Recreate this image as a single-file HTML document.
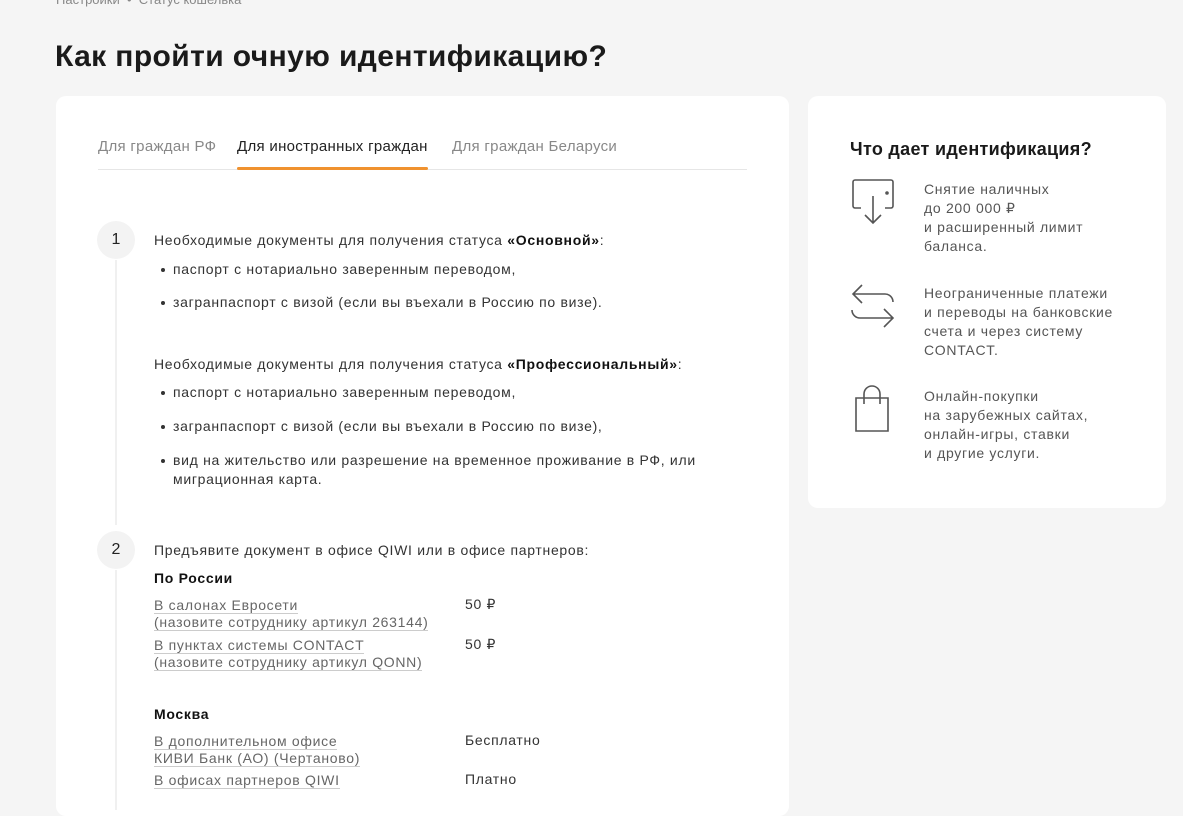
<!DOCTYPE html>
<html><head><meta charset="utf-8"><style>
*{margin:0;padding:0;box-sizing:border-box}
body{width:1183px;height:800px;overflow:hidden;background:#f5f5f5;font-family:"Liberation Sans",sans-serif;color:#333;position:relative}
.a{position:absolute;white-space:nowrap}
.card{position:absolute;background:#fff;border-radius:10px}
.t{font-size:14px;color:#333;letter-spacing:0.7px}
.lk{color:#666;border-bottom:1px solid #ccc;line-height:15px;display:inline-block}
.c{position:absolute;width:38px;height:38px;border-radius:50%;background:#f3f3f3;font-size:16px;text-align:center;line-height:38px;color:#222}
.dot{position:absolute;left:-12px;top:7px;width:4px;height:4px;border-radius:50%;background:#333}
.r{font-size:14px;color:#555;line-height:19px;position:absolute;left:924px;letter-spacing:0.7px;white-space:nowrap}
</style></head><body>
<div class="a" style="left:56px;top:-8px;font-size:13px;color:#888">Настройки &nbsp;•&nbsp; Статус кошелька</div>
<div class="a" style="left:55px;top:40px;font-size:30px;font-weight:bold;color:#1a1a1a;letter-spacing:0.4px">Как пройти очную идентификацию?</div>

<div class="card" style="left:56px;top:96px;width:733px;height:720px"></div>
<div class="card" style="left:808px;top:96px;width:358px;height:412px"></div>

<div class="a" style="left:98px;top:138px;font-size:15px;color:#888;letter-spacing:0.3px">Для граждан РФ</div>
<div class="a" style="left:237px;top:138px;font-size:15px;color:#222;letter-spacing:0.3px">Для иностранных граждан</div>
<div class="a" style="left:452px;top:138px;font-size:15px;color:#888;letter-spacing:0.3px">Для граждан Беларуси</div>
<div class="a" style="left:98px;top:169px;width:649px;height:1px;background:#e6e6e6"></div>
<div class="a" style="left:237px;top:167px;width:191px;height:3px;background:#f0922f;border-radius:2px"></div>

<div class="c" style="left:97px;top:221px">1</div>
<div class="a" style="left:115px;top:260px;width:2px;height:265px;background:#f0f0f0"></div>
<div class="a t" style="left:154px;top:232px">Необходимые документы для получения статуса <b style="color:#111">«Основной»</b>:</div>
<div class="a t" style="left:173px;top:261px"><span class="dot"></span>паспорт с нотариально заверенным переводом,</div>
<div class="a t" style="left:173px;top:294px"><span class="dot"></span>загранпаспорт с визой (если вы въехали в Россию по визе).</div>
<div class="a t" style="left:154px;top:356px">Необходимые документы для получения статуса <b style="color:#111">«Профессиональный»</b>:</div>
<div class="a t" style="left:173px;top:384px"><span class="dot"></span>паспорт с нотариально заверенным переводом,</div>
<div class="a t" style="left:173px;top:418px"><span class="dot"></span>загранпаспорт с визой (если вы въехали в Россию по визе),</div>
<div class="a t" style="left:173px;top:452px"><span class="dot"></span>вид на жительство или разрешение на временное проживание в РФ, или</div>
<div class="a t" style="left:173px;top:471px">миграционная карта.</div>

<div class="c" style="left:97px;top:531px">2</div>
<div class="a" style="left:115px;top:570px;width:2px;height:240px;background:#f0f0f0"></div>
<div class="a t" style="left:154px;top:542px">Предъявите документ в офисе QIWI или в офисе партнеров:</div>
<div class="a t" style="left:154px;top:570px;font-weight:bold;color:#111">По России</div>
<div class="a t" style="left:154px;top:597px"><span class="lk">В салонах Евросети</span><br><span class="lk">(назовите сотруднику артикул 263144)</span></div>
<div class="a t" style="left:465px;top:596px">50 ₽</div>
<div class="a t" style="left:154px;top:637px"><span class="lk">В пунктах системы CONTACT</span><br><span class="lk">(назовите сотруднику артикул QONN)</span></div>
<div class="a t" style="left:465px;top:636px">50 ₽</div>
<div class="a t" style="left:154px;top:706px;font-weight:bold;color:#111">Москва</div>
<div class="a t" style="left:154px;top:733px"><span class="lk">В дополнительном офисе</span><br><span class="lk">КИВИ Банк (АО) (Чертаново)</span></div>
<div class="a t" style="left:465px;top:732px">Бесплатно</div>
<div class="a t" style="left:154px;top:772px"><span class="lk">В офисах партнеров QIWI</span></div>
<div class="a t" style="left:465px;top:771px">Платно</div>

<div class="a" style="left:850px;top:139px;font-size:18px;font-weight:bold;color:#1a1a1a;letter-spacing:0.3px">Что дает идентификация?</div>

<svg class="a" style="left:850px;top:178px" width="48" height="50" viewBox="0 0 48 50" fill="none" stroke="#555" stroke-width="1.6">
<path d="M11 30H5a2 2 0 0 1-2-2V4a2 2 0 0 1 2-2h36a2 2 0 0 1 2 2v24a2 2 0 0 1-2 2h-6"/><circle cx="37" cy="15" r="1" fill="#555"/><path d="M23 18v27M15 37l8 8 8-8"/></svg>
<div class="r" style="top:180px">Снятие наличных<br>до 200 000 ₽<br>и расширенный лимит<br>баланса.</div>

<svg class="a" style="left:848px;top:282px" width="50" height="48" viewBox="0 0 50 48" fill="none" stroke="#555" stroke-width="1.6">
<path d="M14 3 5 12l9 9M5 12h32a8 8 0 0 1 8 8"/><path d="M36 27l9 9-9 9M45 36H12a8 8 0 0 1-8-8"/></svg>
<div class="r" style="top:284px">Неограниченные платежи<br>и переводы на банковские<br>счета и через систему<br>CONTACT.</div>

<svg class="a" style="left:853px;top:385px" width="40" height="48" viewBox="0 0 40 48" fill="none" stroke="#555" stroke-width="1.6">
<path d="M3 13h32v33H3z"/><path d="M11 19V9a8 8 0 0 1 16 0v10"/></svg>
<div class="r" style="top:387px">Онлайн-покупки<br>на зарубежных сайтах,<br>онлайн-игры, ставки<br>и другие услуги.</div>
</body></html>
